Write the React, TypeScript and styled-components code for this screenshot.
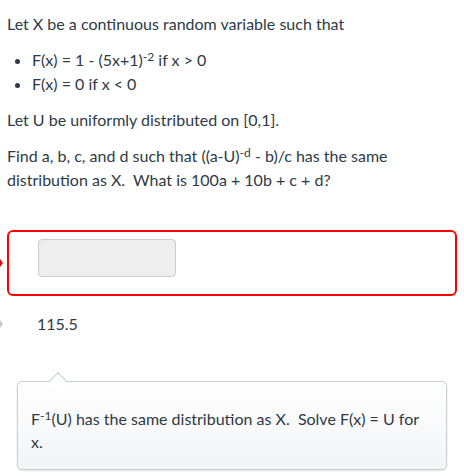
import styled, { createGlobalStyle } from 'styled-components'

const GlobalStyle = createGlobalStyle`
  html, body {
    margin: 0;
    padding: 0;
    background: #ffffff;
  }
  body {
    font-family: Lato, "Open Sans", "Liberation Sans", sans-serif;
    color: #2d3b45;
    font-size: 16px;
  }
`

const ui = {
  Page: styled.div`
    width: 464px;
    height: 476px;
    box-sizing: border-box;
    padding: 12px 7px 0;
    overflow: hidden;
  `,
  Question: styled.div`
    line-height: 24px;

    p {
      margin: 0 0 12px;
    }
  `,
  List: styled.ul`
    margin: 0 0 12px;
    padding-left: 25px;

    li {
      padding-left: 0;
    }
  `,
  Sup: styled.sup`
    font-size: 0.75em;
    line-height: 0;
    vertical-align: 0.45em;
  `,
  AnswerRow: styled.div`
    position: relative;
    margin-top: 38px;
  `,
  AnswerBox: styled.div`
    border: 2px solid #ff0000;
    border-radius: 6px;
    padding: 7px 29px 17px;
  `,
  Marker: styled.span<{ $color: string }>`
    position: absolute;
    left: -7px;
    top: 50%;
    margin-top: -4px;
    width: 0;
    height: 0;
    border-top: 4px solid transparent;
    border-bottom: 4px solid transparent;
    border-left: 3px solid ${({ $color }) => $color};
  `,
  Input: styled.input`
    display: block;
    box-sizing: border-box;
    width: 138px;
    height: 38px;
    margin: 0;
    background: #eeeeee;
    border: 1px solid #cccccc;
    border-radius: 4px;
    font: inherit;
  `,
  CorrectRow: styled.div`
    position: relative;
    margin-top: 16px;
    padding-left: 30px;
    line-height: 24px;
  `,
  Hint: styled.div`
    position: relative;
    margin: 45px 10px 0;
    padding: 25px 13px 16px;
    border: 1px solid #c7cdd1;
    border-radius: 5px;
    background: linear-gradient(#ffffff, #f3f4f6);
    box-shadow: 0 1px 2px rgba(0, 0, 0, 0.12);
    line-height: 23px;

    &::before {
      content: '';
      position: absolute;
      top: -7.5px;
      left: 33px;
      width: 13px;
      height: 13px;
      background: #ffffff;
      border-top: 1px solid #c7cdd1;
      border-left: 1px solid #c7cdd1;
      transform: rotate(45deg);
    }
  `,
  HintText: styled.p`
    margin: 0;
  `
}

const App = () => {
  return (
    <>
      <GlobalStyle />
      <ui.Page>
        <ui.Question>
          <p>Let X be a continuous random variable such that</p>
          <ui.List>
            <li>
              F(x) = 1 - (5x+1)<ui.Sup>-2</ui.Sup> if x &gt; 0
            </li>
            <li>F(x) = 0 if x &lt; 0</li>
          </ui.List>
          <p>Let U be uniformly distributed on [0,1].</p>
          <p>
            Find a, b, c, and d such that ((a-U)<ui.Sup>-d</ui.Sup> - b)/c has the same
            distribution as X.{'\u00a0 '}What is 100a + 10b + c + d?
          </p>
        </ui.Question>

        <ui.AnswerRow>
          <ui.Marker $color="#cc1111" />
          <ui.AnswerBox>
            <ui.Input type="text" readOnly />
          </ui.AnswerBox>
        </ui.AnswerRow>

        <ui.CorrectRow>
          <ui.Marker $color="#c8c8c8" />
          115.5
        </ui.CorrectRow>

        <ui.Hint>
          <ui.HintText>
            F<ui.Sup>-1</ui.Sup>(U) has the same distribution as X.{'\u00a0 '}Solve F(x) = U for x.
          </ui.HintText>
        </ui.Hint>
      </ui.Page>
    </>
  )
}

export default App
